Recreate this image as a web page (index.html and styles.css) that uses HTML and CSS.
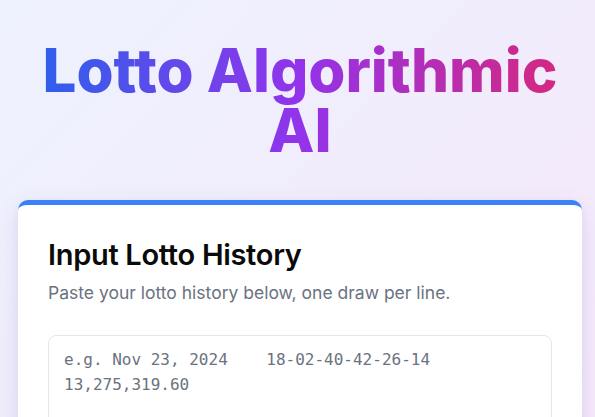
FILE: index.html
```html
<!DOCTYPE html>
<html lang="en">
<head>
<meta charset="utf-8">
<title>Lotto Algorithmic AI</title>
<link rel="stylesheet" href="styles.css">
</head>
<body>
  <div class="page">
    <h1 class="title">Lotto Algorithmic AI</h1>
    <section class="card">
      <h2 class="card-title">Input Lotto History</h2>
      <p class="card-sub">Paste your lotto history below, one draw per line.</p>
      <textarea class="history" rows="6" placeholder="e.g. Nov 23, 2024    18-02-40-42-26-14    13,275,319.60"></textarea>
    </section>
  </div>
</body>
</html>
```

FILE: styles.css
```css
* { box-sizing: border-box; }
html, body { margin: 0; height: 100%; }
body {
  font-family: Inter, "Noto Sans", sans-serif;
  background: linear-gradient(135deg, #eef2fe 0%, #f1ecfc 55%, #f6e9fb 100%);
  overflow: hidden;
}
.page {
  padding: 40px 13px 0 18px;
  display: flex;
  flex-direction: column;
  gap: 40px;
}
.title {
  margin: 0;
  text-align: center;
  font-size: 60px;
  line-height: 60px;
  font-weight: 800;
  background: linear-gradient(90deg, #2563eb 0%, #9333ea 50%, #db2777 100%);
  -webkit-background-clip: text;
  background-clip: text;
  color: transparent;
}
.card {
  background: #fff;
  border-top: 5px solid #3b82f6;
  border-radius: 10px;
  box-shadow: 0 8px 24px rgba(80, 70, 160, 0.12), 0 2px 6px rgba(80, 70, 160, 0.06);
  padding: 32px 30px 30px;
}
.card-title {
  margin: 0;
  font-size: 29px;
  line-height: 36px;
  font-weight: 600;
  color: #0a0a0a;
  letter-spacing: -0.3px;
}
.card-sub {
  margin: 8px 0 30px;
  font-size: 17.5px;
  line-height: 24px;
  color: #6b7280;
}
.history {
  display: block;
  width: 100%;
  height: 200px;
  border: 1px solid #e5e7eb;
  border-radius: 8px;
  padding: 11px 15px;
  font-family: "DejaVu Sans Mono", monospace;
  font-size: 16px;
  line-height: 25px;
  resize: none;
  outline: none;
}
.history::placeholder { color: #6b7280; opacity: 1; }
```
